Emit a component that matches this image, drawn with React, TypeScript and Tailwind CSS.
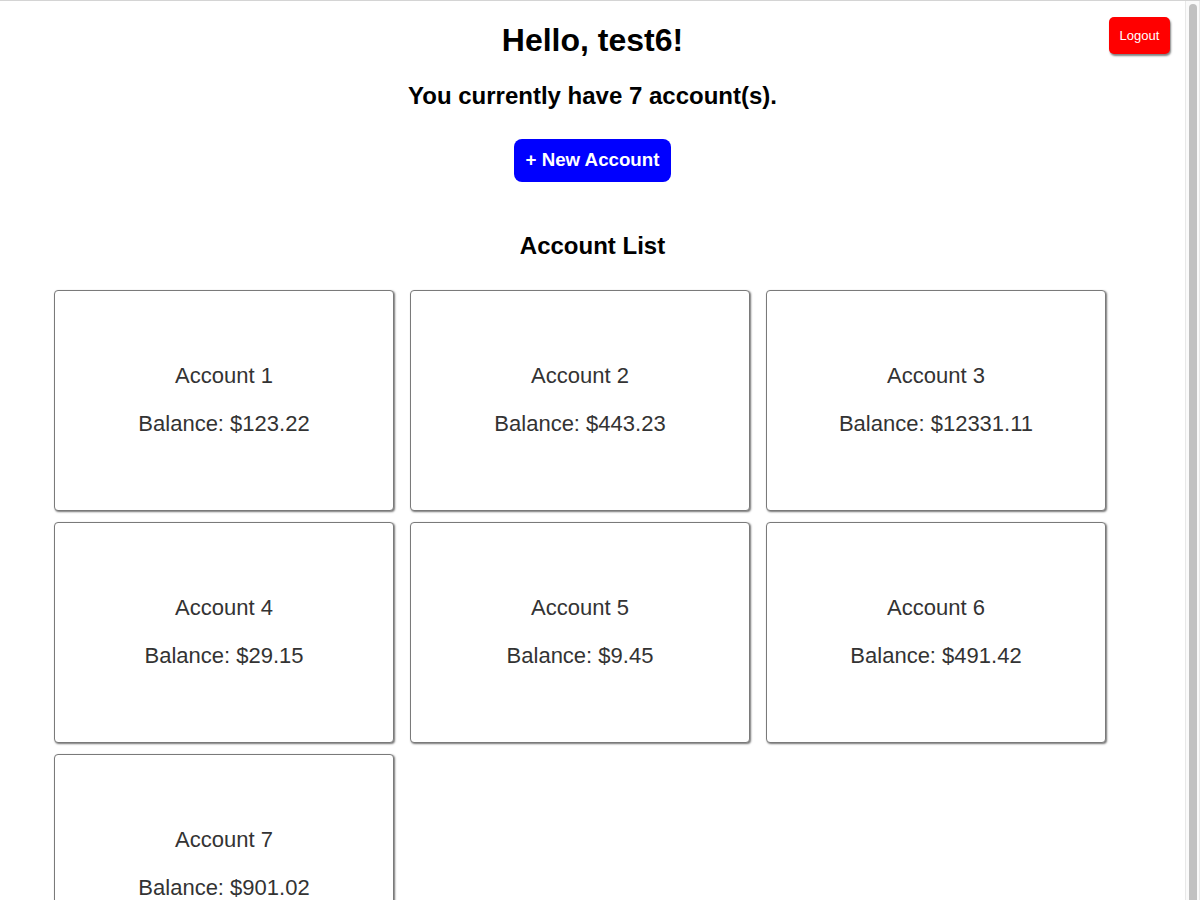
import React from 'react';

const ACCOUNTS = [
  { name: 'Account 1', balance: '123.22' },
  { name: 'Account 2', balance: '443.23' },
  { name: 'Account 3', balance: '12331.11' },
  { name: 'Account 4', balance: '29.15' },
  { name: 'Account 5', balance: '9.45' },
  { name: 'Account 6', balance: '491.42' },
  { name: 'Account 7', balance: '901.02' },
];

function AccountCard({ name, balance }: { name: string; balance: string }) {
  return (
    <div className="flex h-[221px] w-[340px] flex-col items-center justify-center gap-[23px] rounded-[4px] border border-[#7a7a7a] bg-white pb-[2px] text-[22px] leading-[25px] text-[#333] shadow-[1px_1px_2px_rgba(0,0,0,0.55)]">
      <div>{name}</div>
      <div>Balance: ${balance}</div>
    </div>
  );
}

export default function App() {
  return (
    <div className="flex h-[900px] w-[1200px] overflow-hidden border-t border-[#d4d4d4] bg-white font-['Liberation_Sans',Arial,sans-serif] text-black">
      <main className="relative flex-1 pt-[21px]">
        <button className="absolute right-[15px] top-[16px] h-[37px] w-[61px] rounded-[5px] bg-[#ff0000] text-[13px] text-white shadow-[1px_2px_2px_rgba(0,0,0,0.5)]">Logout</button>

        <h1 className="text-center text-[32px] font-bold leading-[37px]">Hello, test6!</h1>
        <h2 className="mt-[23px] text-center text-[24px] font-bold leading-[28px]">You currently have 7 account(s).</h2>
        <div className="mt-[29px] flex justify-center">
          <button className="h-[43px] w-[157px] rounded-[8px] bg-[#0000ff] text-[18.72px] font-bold text-white">+ New Account</button>
        </div>
        <h2 className="mt-[50px] text-center text-[24px] font-bold leading-[28px]">Account List</h2>

        <div className="mt-[30px] grid grid-cols-[repeat(3,340px)] gap-x-[16px] gap-y-[11px] pl-[54px]">
          {ACCOUNTS.map(a => <AccountCard key={a.name} {...a} />)}
        </div>
      </main>

      {/* browser scrollbar */}
      <div className="flex w-[15px] justify-center border-l border-r border-[#e8e8e8] bg-[#fafafa] pt-[3px]">
        <div className="h-[1200px] w-[8px] rounded-full bg-[#c1c1c1]" />
      </div>
    </div>
  );
}
